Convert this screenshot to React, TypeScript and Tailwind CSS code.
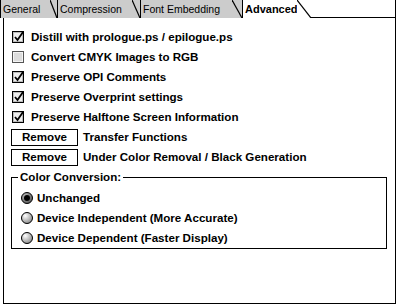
import React from "react";

const MAIN = { fontFamily: '"Liberation Sans", Arial, sans-serif' };

function Tab({ label, active, next, body, slant }: { label: string; active?: boolean; next: string; body: number; slant: number }) {
  const fill = active ? "#ffffff" : "#cccccc";
  return (
    <div className="flex h-[18px] shrink-0">
      <div
        className={`flex items-center h-full border-l border-black pl-[2px] ${active ? "bg-white font-bold text-[11px]" : "bg-[#cccccc] text-[10.5px]"}`}
        style={{ width: body }}
      >
        <span className="leading-none text-black">{label}</span>
      </div>
      <svg width={slant} height={18} className="block">
        <polygon points={`0,0 ${slant},18 0,18`} fill={fill} />
        <polygon points={`0,0 ${slant},0 ${slant},18`} fill={next} />
        <line x1={0} y1={0} x2={slant} y2={18} stroke="#000" strokeWidth={1.2} />
      </svg>
    </div>
  );
}

function CheckBox({ checked }: { checked?: boolean }) {
  return (
    <svg width={12} height={12} className="block shrink-0">
      <rect x={0.5} y={0.5} width={11} height={11} fill={checked ? "#ffffff" : "#d6d6d6"} stroke={checked ? "#000" : "#555"} />
      {checked ? (
        <>
          <rect x={1.5} y={1.5} width={9} height={9} fill="#eeeeee" stroke="#bbbbbb" strokeWidth={1} />
          <path d="M3 6 L5.5 9 L11 1" fill="none" stroke="#000" strokeWidth={1.8} />
        </>
      ) : (
        <rect x={1.5} y={1.5} width={9} height={9} fill="#dcdcdc" stroke="#f4f4f4" strokeWidth={1} />
      )}
    </svg>
  );
}

function Radio({ selected }: { selected?: boolean }) {
  const id = selected ? "rs" : "ru";
  return (
    <svg width={12} height={12} className="block shrink-0">
      <defs>
        <radialGradient id={id} cx="35%" cy="30%" r="75%">
          <stop offset="0%" stopColor={selected ? "#bbbbbb" : "#ffffff"} />
          <stop offset="100%" stopColor={selected ? "#555555" : "#888888"} />
        </radialGradient>
      </defs>
      <circle cx={6} cy={6} r={5.5} fill={`url(#${id})`} stroke="#000" strokeWidth={1} />
      {selected && <circle cx={6} cy={6} r={3} fill="#000" />}
    </svg>
  );
}

function CheckRow({ label, checked }: { label: string; checked?: boolean }) {
  return (
    <div className="flex items-center h-[20px]">
      <CheckBox checked={checked} />
      <span className="ml-[7px] font-bold text-[11.6px] leading-none text-black">{label}</span>
    </div>
  );
}

function ButtonRow({ label }: { label: string }) {
  return (
    <div className="flex items-center h-[20px]">
      <div className="w-[67px] h-[17px] -ml-[1px] border border-black bg-white flex items-center justify-center font-bold text-[11.6px] leading-none text-black">
        Remove
      </div>
      <span className="ml-[5px] font-bold text-[11.6px] leading-none text-black">{label}</span>
    </div>
  );
}

function RadioRow({ label, selected }: { label: string; selected?: boolean }) {
  return (
    <div className="flex items-center h-[20px]">
      <Radio selected={selected} />
      <span className="ml-[4px] font-bold text-[11.6px] leading-none text-black">{label}</span>
    </div>
  );
}

export default function App() {
  return (
    <div className="w-[400px] h-[306px] bg-white overflow-hidden" style={MAIN}>
      <div className="flex h-[18px]">
        <Tab label="General" body={50} slant={7} next="#cccccc" />
        <Tab label="Compression" body={75} slant={8} next="#cccccc" />
        <Tab label="Font Embedding" body={92} slant={10} next="#cccccc" />
        <Tab label="Advanced" active body={55} slant={14} next="#ffffff" />
        <div className="flex-1 mr-[4px] border-b border-r border-black" />
      </div>
      <div className="ml-[3px] mr-[4px] h-[286px] border-l border-r border-b border-black pt-[9px] pl-[8px] pr-[8px]">
        <CheckRow label="Distill with prologue.ps / epilogue.ps" checked />
        <CheckRow label="Convert CMYK Images to RGB" />
        <CheckRow label="Preserve OPI Comments" checked />
        <CheckRow label="Preserve Overprint settings" checked />
        <CheckRow label="Preserve Halftone Screen Information" checked />
        <ButtonRow label="Transfer Functions" />
        <ButtonRow label="Under Color Removal / Black Generation" />
        <div className="relative mt-[10px] -ml-[1px] w-[376px] h-[72px] border border-black pt-[10px] pl-[9px]">
          <span className="absolute -top-[8px] left-[6px] bg-white px-[2px] font-bold text-[11.6px] leading-[14px] text-black">
            Color Conversion:
          </span>
          <RadioRow label="Unchanged" selected />
          <RadioRow label="Device Independent (More Accurate)" />
          <RadioRow label="Device Dependent (Faster Display)" />
        </div>
      </div>
    </div>
  );
}
